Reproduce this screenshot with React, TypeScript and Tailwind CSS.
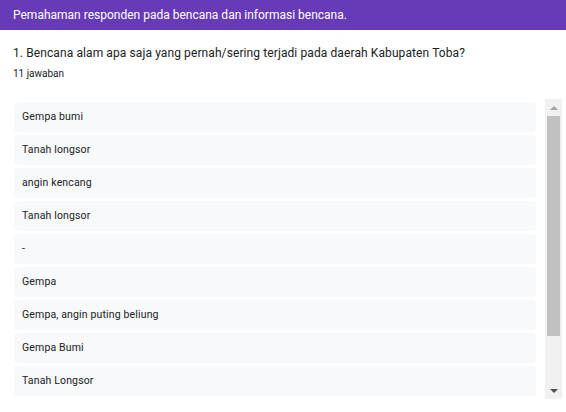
const ANSWERS = [
  "Gempa bumi",
  "Tanah longsor",
  "angin kencang",
  "Tanah longsor",
  "-",
  "Gempa",
  "Gempa, angin puting beliung",
  "Gempa Bumi",
  "Tanah Longsor",
];

export default function App() {
  return (
    <div className="h-[412px] w-[566px] overflow-hidden bg-white font-['Roboto',sans-serif]">
      {/* Section header */}
      <div className="flex h-[30px] items-center bg-[#673ab7] px-[13px] text-[12px] text-white">
        Pemahaman responden pada bencana dan informasi bencana.
      </div>

      {/* Question */}
      <div className="px-[13px] pt-[14px]">
        <p className="text-[12px] leading-[18px] tracking-[0.1px] text-[#202124]">
          1. Bencana alam apa saja yang pernah/sering terjadi pada daerah Kabupaten Toba?
        </p>
        <p className="mt-[5px] text-[10px] leading-[14px] text-[#202124]">11 jawaban</p>
      </div>

      {/* Answers list */}
      <div className="ml-[14px] mt-[18px] flex h-[300px] w-[548px]">
        <div className="flex-1 overflow-hidden pr-[9px] pt-[3px]">
          <div className="flex flex-col gap-[3px]">
            {ANSWERS.map((a, i) => (
              <div
                key={i}
                className="flex h-[30px] shrink-0 items-center rounded-[4px] bg-[#f8f9fa] px-[8px] text-[10.5px] tracking-[0.15px] text-[#202124]"
              >
                {a}
              </div>
            ))}
          </div>
        </div>

        {/* Scrollbar */}
        <div className="flex w-[17px] flex-col bg-[#f1f1f1]">
          <div className="flex h-[17px] items-center justify-center">
            <div className="h-0 w-0 border-x-[4px] border-b-[4px] border-x-transparent border-b-[#a3a3a3]" />
          </div>
          <div className="mx-[2px] h-[220px] bg-[#c1c1c1]" />
          <div className="flex-1" />
          <div className="flex h-[17px] items-center justify-center">
            <div className="h-0 w-0 border-x-[4px] border-t-[4px] border-x-transparent border-t-[#505050]" />
          </div>
        </div>
      </div>
    </div>
  );
}
